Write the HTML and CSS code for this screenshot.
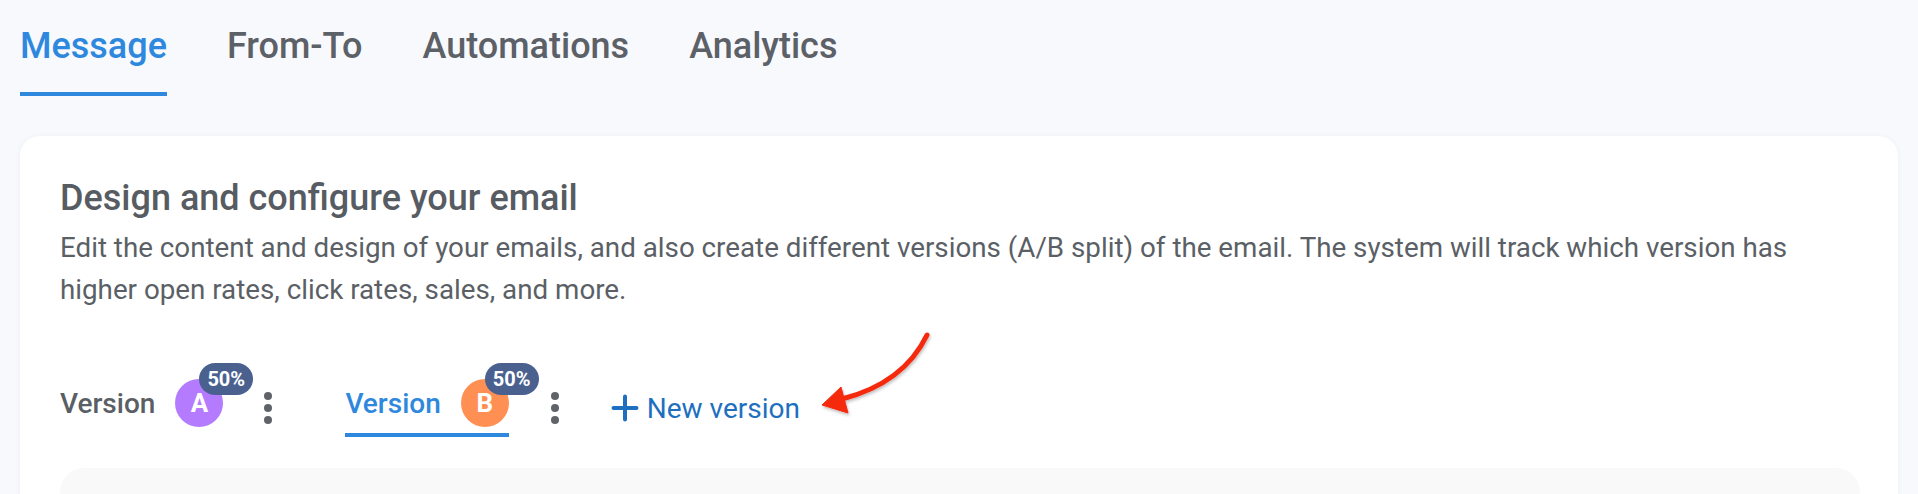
FILE: index.html
```html
<!DOCTYPE html>
<html lang="en">
<head>
<meta charset="utf-8">
<title>Message</title>
<link rel="stylesheet" href="styles.css">
</head>
<body>
<nav class="tabs">
  <a class="tab active">Message</a>
  <a class="tab">From-To</a>
  <a class="tab">Automations</a>
  <a class="tab">Analytics</a>
</nav>
<section class="card">
  <h1 class="title">Design and configure your email</h1>
  <p class="desc">Edit the content and design of your emails, and also create different versions (A/B split) of the email. The system will track which version has higher open rates, click rates, sales, and more.</p>
  <div class="versions">
    <div class="vtab">
      <span class="vlabel">Version</span>
      <span class="avatar avatar-a">A<span class="badge">50%</span></span>
    </div>
    <span class="kebab"><i></i><i></i><i></i></span>
    <div class="vtab active">
      <span class="vlabel">Version</span>
      <span class="avatar avatar-b">B<span class="badge">50%</span></span>
    </div>
    <span class="kebab"><i></i><i></i><i></i></span>
    <a class="new-version">
      <svg class="plus" width="28" height="28" viewBox="0 0 28 28"><path d="M14 2.5V25.5M2.5 14H25.5" stroke="currentColor" stroke-width="4" stroke-linecap="round" fill="none"/></svg>
      <span>New version</span>
    </a>
  </div>
  <div class="editor"></div>
</section>
<svg class="annot" width="1918" height="494" viewBox="0 0 1918 494">
  <defs>
    <filter id="sh" x="-20%" y="-20%" width="140%" height="140%">
      <feDropShadow dx="1" dy="2" stdDeviation="1.5" flood-color="#000" flood-opacity="0.25"/>
    </filter>
  </defs>
  <g filter="url(#sh)" fill="#f52a10" stroke="#f52a10">
    <path d="M927 335 C912 366 885 388 842 399" fill="none" stroke-width="5" stroke-linecap="round"/>
    <path d="M822 405 L841 387 L848 413 Z" stroke-width="1" stroke-linejoin="round"/>
  </g>
</svg>
</body>
</html>
```
FILE: styles.css
```css
* { box-sizing: border-box; }
html, body { margin: 0; padding: 0; }
body {
  position: relative;
  height: 494px;
  overflow: hidden;
  background: #f8f9fd;
  font-family: Roboto, "Noto Sans", Arial, sans-serif;
  color: #5b5f66;
}
.tabs {
  display: flex;
  gap: 60px;
  padding: 25px 20px 0;
}
.tab {
  font-size: 36px;
  font-weight: 500;
  line-height: 42px;
  color: #5c6067;
  padding-bottom: 25px;
  border-bottom: 4px solid transparent;
  cursor: pointer;
}
.tab.active {
  color: #2e88dd;
  border-bottom-color: #2e88dd;
}
.card {
  margin: 40px 20px 0;
  background: #fff;
  border-radius: 20px;
  padding: 41px 38px 0 40px;
  height: 400px;
  box-shadow: 0 0 6px rgba(40, 50, 90, 0.04);
}
.title {
  margin: 0;
  font-size: 36px;
  font-weight: 500;
  line-height: 42px;
  color: #575b62;
}
.desc {
  margin: 8px 0 0;
  font-size: 27.75px;
  line-height: 42px;
  color: #5b5f66;
}
.versions {
  display: flex;
  align-items: center;
  margin-top: 68px;
}
.vtab {
  display: flex;
  align-items: center;
  gap: 20px;
  padding-bottom: 6px;
  border-bottom: 4px solid transparent;
}
.vtab.active { border-bottom-color: #2e88dd; }
.vlabel {
  font-size: 28px;
  font-weight: 500;
  color: #5a5e65;
}
.vtab.active .vlabel { color: #2e88dd; }
.avatar {
  position: relative;
  width: 48px;
  height: 48px;
  border-radius: 50%;
  display: flex;
  align-items: center;
  justify-content: center;
  color: #fff;
  font-size: 26px;
  font-weight: 700;
}
.avatar-a { background: #b57bff; }
.avatar-b { background: #ff8f52; }
.badge {
  position: absolute;
  left: 24px;
  top: -16px;
  height: 32px;
  padding: 0 8px;
  border-radius: 16px;
  background: #4a6190;
  color: #fff;
  font-size: 20px;
  font-weight: 700;
  line-height: 32px;
  white-space: nowrap;
}
.kebab {
  display: flex;
  flex-direction: column;
  gap: 4px;
  margin: 0 73px 0 41px;
}
.kebab i {
  width: 8px;
  height: 8px;
  border-radius: 50%;
  background: #5f6368;
}
.versions .kebab:nth-of-type(2) { margin-right: 52px; margin-left: 42px; }
.new-version {
  display: flex;
  align-items: center;
  gap: 8px;
  color: #1f6fc0;
  font-size: 28px;
  cursor: pointer;
}
.plus { display: block; }
.editor {
  margin-top: 31px;
  height: 120px;
  background: #f9f9f9;
  border-radius: 24px;
}
.annot {
  position: absolute;
  left: 0;
  top: 0;
  pointer-events: none;
}
```
